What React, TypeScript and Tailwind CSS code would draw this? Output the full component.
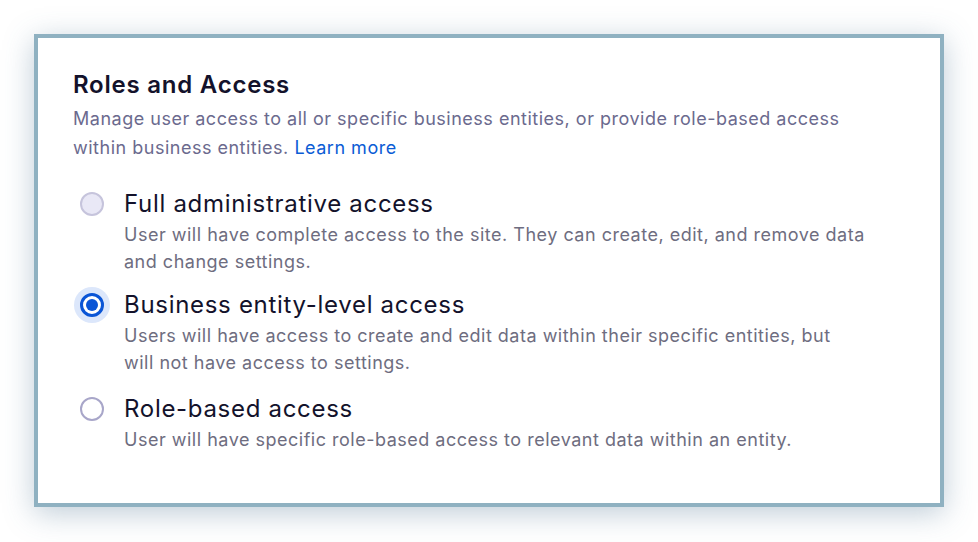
import React from "react";

type Opt = { label: string; lines: string[]; state: "disabled" | "selected" | "default" };

const options: Opt[] = [
  {
    label: "Full administrative access",
    lines: [
      "User will have complete access to the site. They can create, edit, and remove data",
      "and change settings.",
    ],
    state: "disabled",
  },
  {
    label: "Business entity-level access",
    lines: [
      "Users will have access to create and edit data within their specific entities, but",
      "will not have access to settings.",
    ],
    state: "selected",
  },
  {
    label: "Role-based access",
    lines: ["User will have specific role-based access to relevant data within an entity."],
    state: "default",
  },
];

function Radio({ state }: { state: Opt["state"] }) {
  if (state === "selected") {
    return (
      <span className="flex h-[24px] w-[24px] items-center justify-center rounded-full border-[3px] border-[#0a55d6] bg-white shadow-[0_0_0_6px_#dce7fb]">
        <span className="h-[12px] w-[12px] rounded-full bg-[#0a55d6]" />
      </span>
    );
  }
  if (state === "disabled") {
    return <span className="h-[24px] w-[24px] rounded-full border-2 border-[#c6c4dc] bg-[#e9e8f6]" />;
  }
  return <span className="h-[24px] w-[24px] rounded-full border-2 border-[#a8a6c9] bg-white" />;
}

export default function App() {
  return (
    <div
      className="min-h-[542px] bg-white px-[34px] pt-[34px] pb-[35px]"
      style={{ fontFamily: "Inter, 'Noto Sans', sans-serif" }}
    >
      <div className="h-[473px] border-4 border-[#8fb1c1] bg-white pl-[35px] pt-[31px] shadow-[0_6px_28px_rgba(70,110,140,0.35)]">
        <h2 className="text-[24px] leading-[32px] font-semibold tracking-[0.032em] text-[#13122b]">
          Roles and Access
        </h2>
        <p className="mt-[3px] text-[18px] leading-[29px] tracking-[0.028em] text-[#6b6a8e]">
          Manage user access to all or specific business entities, or provide role-based access
          <br />
          within business entities. <span className="text-[#0b5cd5]">Learn more</span>
        </p>
        <div className="mt-[27px] flex flex-col">
          {options.map((o, idx) => (
            <div
              key={o.label}
              className={
                idx === 0 ? "flex items-start" : idx === 1 ? "mt-[15px] flex items-start" : "mt-[18px] flex items-start"
              }
            >
              <div className="flex h-[30px] w-[38px] shrink-0 items-center justify-center">
                <Radio state={o.state} />
              </div>
              <div className="ml-[13px]">
                <div className="text-[24px] leading-[30px] tracking-[0.029em] text-[#13122b]">{o.label}</div>
                <div className="mt-[2px] text-[18px] leading-[27px] tracking-[0.028em] text-[#6e6d80] whitespace-nowrap">
                  {o.lines.map((l, i) => (
                    <div key={i}>{l}</div>
                  ))}
                </div>
              </div>
            </div>
          ))}
        </div>
      </div>
    </div>
  );
}
